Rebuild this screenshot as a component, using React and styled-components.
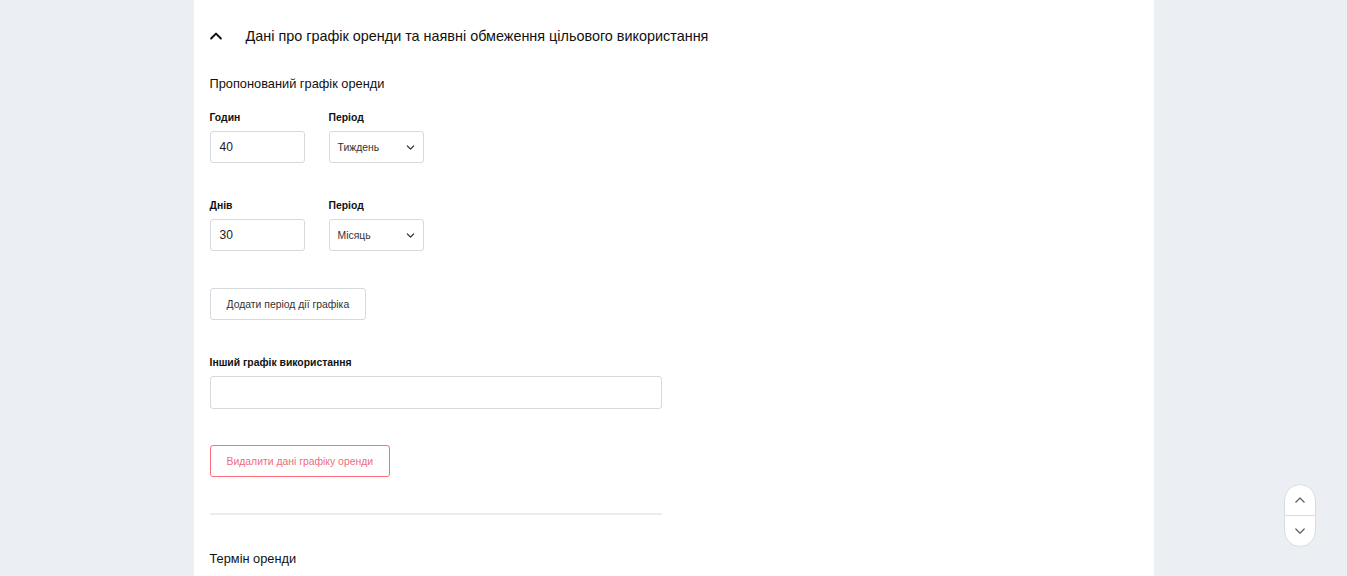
import styled, { createGlobalStyle } from 'styled-components';

const GlobalStyle = createGlobalStyle`
  html, body {
    margin: 0;
    padding: 0;
    background: #ebeef3;
    font-family: 'Liberation Sans', Arial, sans-serif;
    color: #1a1a1a;
    overflow: hidden;
  }
`;

const Page = styled.div`
  display: flex;
  justify-content: center;
  min-height: 100vh;
`;

const Panel = styled.div`
  width: 960px;
  min-height: 100vh;
  background: #fff;
  padding: 0 16px;
  box-sizing: border-box;
`;

const SectionHeader = styled.div`
  height: 74px;
  display: flex;
  align-items: center;
  padding-bottom: 2px;
  box-sizing: border-box;
`;

const Chevron = styled.span`
  width: 14px;
  height: 14px;
  display: flex;
  align-items: center;
  justify-content: center;
  margin-left: -1px;
  margin-right: 23px;
`;

const SectionTitle = styled.h2`
  margin: 0;
  font-size: 14.4px;
  font-weight: 400;
  line-height: 20px;
  color: #111;
`;

const SubTitle = styled.div`
  font-size: 12.8px;
  line-height: 20px;
  color: #111;
  margin-top: ${(p) => p.top || 0}px;
`;

const Row = styled.div`
  display: flex;
  gap: 24px;
  margin-top: ${(p) => p.top || 0}px;
`;

const Field = styled.div`
  display: flex;
  flex-direction: column;
  gap: 8px;
  width: ${(p) => p.width || 95}px;
  margin-top: ${(p) => p.top || 0}px;
`;

const Label = styled.label`
  font-size: 10.4px;
  font-weight: 700;
  line-height: 12px;
  color: #111;
  padding-top: 1px;
  margin-bottom: -1px;
`;

const Input = styled.div`
  height: ${(p) => p.h || 32}px;
  box-sizing: border-box;
  border: 1px solid #d6d9de;
  border-radius: 3px;
  padding: 0 9px;
  display: flex;
  align-items: center;
  font-size: 12px;
  color: #1a1a1a;
`;

const Select = styled(Input)`
  justify-content: space-between;
  padding: 0 8px;
  font-size: 10.4px;
  color: #333;
`;

const Button = styled.button`
  display: block;
  height: 32px;
  box-sizing: border-box;
  padding: 0 ${(p) => p.px || 16}px;
  background: #fff;
  border: 1px solid ${(p) => (p.danger ? '#ff6f7b' : '#d6d9de')};
  border-radius: 3px;
  font-family: 'Liberation Sans', Arial, sans-serif;
  font-size: 10.4px;
  color: ${(p) => (p.danger ? '#ef6c7e' : '#333')};
  margin-top: ${(p) => p.top || 0}px;
  cursor: pointer;
`;

const Divider = styled.hr`
  width: 452px;
  height: 2px;
  border: 0;
  background: #ececec;
  margin: 36px 0 0 0;
`;

const ScrollNav = styled.div`
  position: fixed;
  left: 1284px;
  top: 484px;
  width: 32px;
  height: 63px;
  box-sizing: border-box;
  border: 1px solid #d7dbe1;
  border-radius: 16px;
  background: #fff;
  display: flex;
  flex-direction: column;
  overflow: hidden;
`;

const NavButton = styled.div`
  flex: 1;
  display: flex;
  align-items: center;
  justify-content: center;
  & + & {
    border-top: 1px solid #d7dbe1;
  }
`;

const ChevronIcon = ({ up, size = 10, stroke = '#555', width = 1.4 }) => (
  <svg width={size} height={size} viewBox="0 0 10 10" fill="none">
    <path
      d={up ? 'M1.5 6.8 L5 3.3 L8.5 6.8' : 'M1.5 3.3 L5 6.8 L8.5 3.3'}
      stroke={stroke}
      strokeWidth={width}
      strokeLinecap="round"
      strokeLinejoin="round"
    />
  </svg>
);

export default function App() {
  return (
    <Page>
      <GlobalStyle />
      <Panel>
        <SectionHeader>
          <Chevron>
            <ChevronIcon up size={14} stroke="#111" width={1.4} />
          </Chevron>
          <SectionTitle>Дані про графік оренди та наявні обмеження цільового використання</SectionTitle>
        </SectionHeader>

        <SubTitle>Пропонований графік оренди</SubTitle>

        <Row top={17}>
          <Field>
            <Label>Годин</Label>
            <Input>40</Input>
          </Field>
          <Field>
            <Label>Період</Label>
            <Select>
              Тиждень
              <ChevronIcon size={9} stroke="#333" width={1.3} />
            </Select>
          </Field>
        </Row>

        <Row top={36}>
          <Field>
            <Label>Днів</Label>
            <Input>30</Input>
          </Field>
          <Field>
            <Label>Період</Label>
            <Select>
              Місяць
              <ChevronIcon size={9} stroke="#333" width={1.3} />
            </Select>
          </Field>
        </Row>

        <Button top={37}>Додати період дії графіка</Button>

        <Field width={452} top={36}>
          <Label>Інший графік використання</Label>
          <Input h={33} />
        </Field>

        <Button danger top={36} px={16}>Видалити дані графіку оренди</Button>

        <Divider />

        <SubTitle top={34}>Термін оренди</SubTitle>
      </Panel>

      <ScrollNav>
        <NavButton>
          <ChevronIcon up size={12} stroke="#666" width={1.1} />
        </NavButton>
        <NavButton>
          <ChevronIcon size={12} stroke="#666" width={1.1} />
        </NavButton>
      </ScrollNav>
    </Page>
  );
}
